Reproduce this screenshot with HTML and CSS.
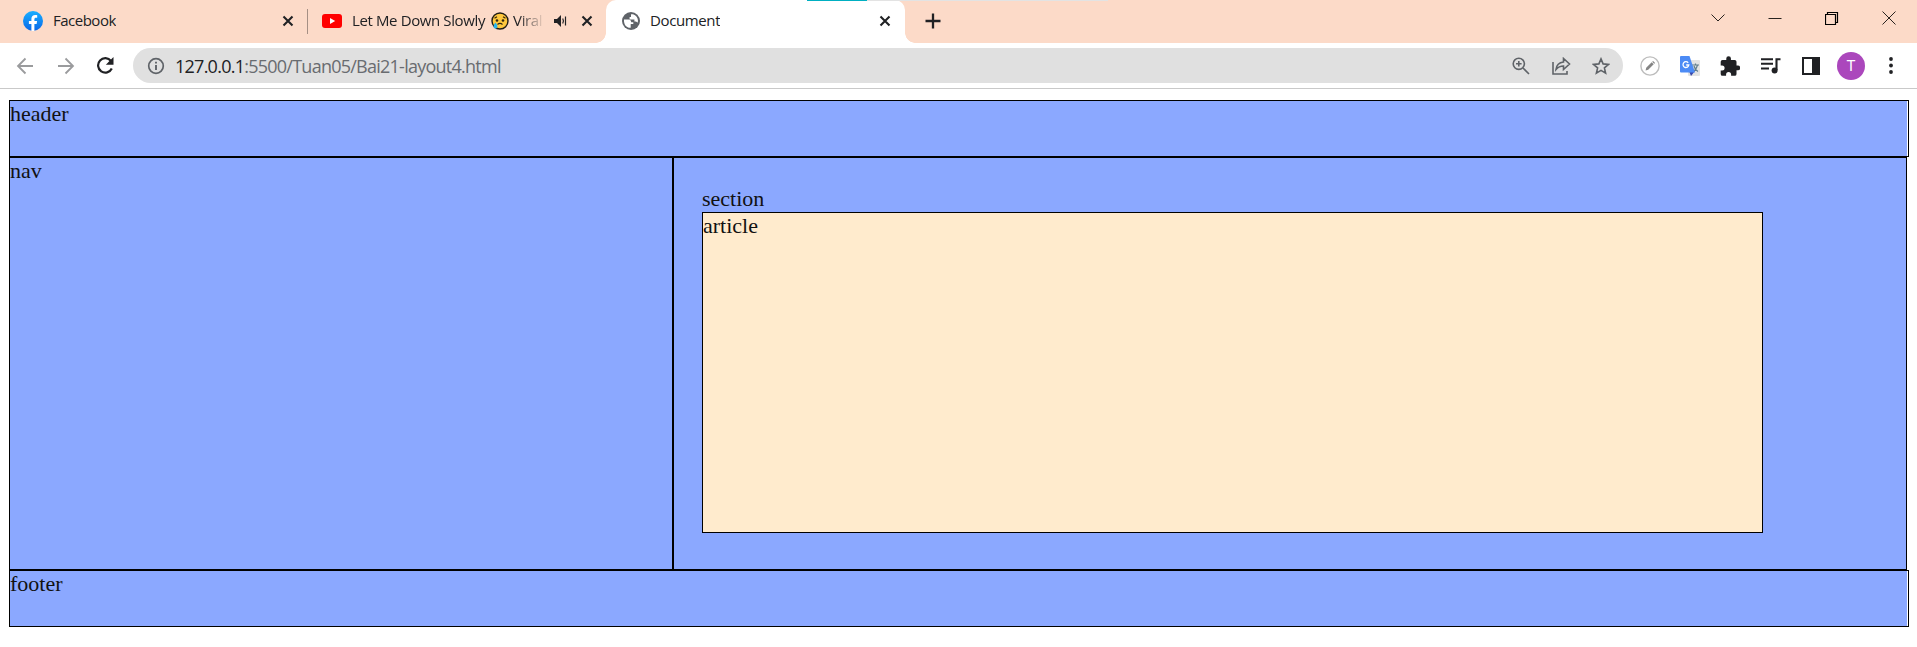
FILE: index.html
```html
<!DOCTYPE html>
<html lang="en">
<head>
<meta charset="utf-8">
<title>Document</title>
<link rel="stylesheet" href="styles.css">
</head>
<body>
<div class="tabstrip">
  <div class="tab tab-facebook">
    <svg class="favicon" width="20" height="20" viewBox="0 0 20 20"><defs><linearGradient id="fb" x2="0" y2="1"><stop stop-color="#19afff"/><stop offset="1" stop-color="#0866e8"/></linearGradient></defs><circle cx="10" cy="10" r="10" fill="url(#fb)"/><path d="M8.400 20v-7H5.900v-3h2.500V8c0-2.600 1.500-4 3.800-4 1 0 2 .2 2 .2v2.500h-1.200c-1.200 0-1.600.7-1.600 1.500V10h2.700l-.5 3h-2.200v7z" fill="#fff"/></svg>
    <span class="tab-title">Facebook</span>
    <svg class="close" width="12" height="12" viewBox="0 0 12 12"><path d="M1.500 1.500l9 9m0-9l-9 9"/></svg>
  </div>
  <div class="tab-divider"></div>
  <div class="tab tab-youtube">
    <svg class="favicon" width="20" height="14" viewBox="0 0 20 14"><rect width="20" height="14" rx="3" fill="#f00"/><path d="M8 4l5.200 3L8 10z" fill="#fff"/></svg>
    <span class="tab-title">Let Me Down Slowly
      <svg class="emoji" width="18" height="18" viewBox="0 0 18 18"><circle cx="9" cy="9" r="8" fill="#ffc83d" stroke="#211d16" stroke-width="1.400"/><path d="M3.500 6.200l2.500-1.500m8.500 1.500L12 4.700M6.500 12.500q2.500-2.200 5 0" fill="none" stroke="#30250e" stroke-width="1.100"/><circle cx="6" cy="8.500" r="1.300" fill="#30250e"/><circle cx="12" cy="8.500" r="1.300" fill="#30250e"/><path d="M4.500 10.500c3 3.400 2 6 0 6s-3-2.600 0-6z" fill="#26b5ef"/></svg>
      Viral</span>
    <svg class="speaker" width="13" height="12" viewBox="0 0 13 12"><path d="M0 4h3l4-4v12L3 8H0z" fill="#202124"/><path d="M8.700 3.500q1.500 2.500 0 5M11.500 1.500v9" fill="none" stroke="#202124" stroke-width="1.200"/></svg>
    <svg class="close" width="12" height="12" viewBox="0 0 12 12"><path d="M1.500 1.500l9 9m0-9l-9 9"/></svg>
  </div>
  <div class="tab tab-active">
    <svg class="favicon" width="18" height="18" viewBox="0 0 18 18"><circle cx="9" cy="9" r="9" fill="#5f6368"/><path d="M2 7.500l4.500 0c1.800.2 2.700 1.200 2.700 2.800h2.100v1.800H8.700v3.700C4.700 16 1.600 13 2 7.500zM9 2.200l2 .1c3 1 5 3.500 5 6.700l-.5 1.700c-1-1.300-2.100-1.100-3.100-1.100V7.400H7.600V4.900H9z" fill="#fff"/></svg>
    <span class="tab-title">Document</span>
    <svg class="close" width="12" height="12" viewBox="0 0 12 12"><path d="M1.500 1.500l9 9m0-9l-9 9"/></svg>
  </div>
  <svg class="new-tab" width="16" height="16" viewBox="0 0 16 16"><path d="M8 .5v15M.5 8h15" stroke="#202124" stroke-width="2.300"/></svg>
  <div class="window-controls">
    <svg width="14" height="14" viewBox="0 0 14 14"><path d="M.5 3.500l6.500 6.500 6.500-6.500"/></svg>
    <svg width="14" height="14" viewBox="0 0 14 14"><path d="M.5 7.500h13" stroke="#000"/></svg>
    <svg width="14" height="14" viewBox="0 0 14 14"><path class="restore" d="M.5 3.500h10v10H.5zM2.500 3V1.500h10v10H11"/></svg>
    <svg width="14" height="14" viewBox="0 0 14 14"><path d="M.5.5l13 13m0-13L.5 13.500"/></svg>
  </div>
  <div class="progress"></div>
</div>
<div class="toolbar">
  <svg class="back" width="18" height="18" viewBox="0 0 18 18"><path d="M17 9H2m7.500-7.500L2 9l7.500 7.500"/></svg>
  <svg class="forward" width="18" height="18" viewBox="0 0 18 18"><path d="M1 9h15M8.500 1.500L16 9l-7.500 7.500"/></svg>
  <svg class="reload" width="18" height="18" viewBox="0 0 18 18"><path d="M15 4A7.200 7.200 0 1 0 15.800 11.500" fill="none" stroke="#202124" stroke-width="2.200"/><path d="M17.500 0v7.700H9.800z" fill="#202124"/></svg>
  <div class="omnibox">
    <svg class="info" width="18" height="18" viewBox="0 0 18 18"><circle cx="9" cy="9" r="7.300" fill="none" stroke="#5f6368" stroke-width="1.700"/><path d="M9 8v5M9 4.700v1.800" stroke="#5f6368" stroke-width="1.900"/></svg>
    <span class="url"><b>127.0.0.1</b>:5500/Tuan05/Bai21-layout4.html</span>
    <svg class="zoom-icon" width="18" height="18" viewBox="0 0 18 18"><circle cx="6.800" cy="6.800" r="5.600"/><path d="M11 11l6 6M4 6.800h5.600M6.800 4v5.600"/></svg>
    <svg class="share" width="19" height="18" viewBox="0 0 19 18"><path d="M1 5v12h14v-3M4 12.500C4.500 8 7 5.500 11.500 5V1.500l6 5.500-6 5.500V9Q7 9 4 12.500z"/></svg>
    <svg class="star" width="18" height="18" viewBox="0 0 18 18"><path d="M9 1.900l2.100 5 5.400.5-4.100 3.500 1.200 5.300L9 13.400l-4.600 2.800 1.200-5.300L1.500 7.400l5.400-.5z"/></svg>
  </div>
  <svg class="pencil" width="20" height="20" viewBox="0 0 20 20"><circle cx="10" cy="10" r="9.100" fill="none" stroke="#bdbdbd" stroke-width="1.400"/><path d="M5.600 14.400l.6-2.600 5.500-5.500 2 2-5.500 5.500zM12.200 5.800l.9-.9 2 2-.9.9z" fill="#858585"/></svg>
  <svg class="translate" width="20" height="20" viewBox="0 0 20 20"><rect x="8" y="4" width="12" height="16" rx="1" fill="#e3e3e3"/><path d="M12 9h7M15.500 7.500V9m2 0q-1.500 5-4.500 6.500M14 10q1 4 4 5.500" fill="none" stroke="#607d8b" stroke-width="1.200"/><path d="M9 15h6l-4 5z" fill="#3949ab"/><path d="M1 0h8.500L15 16.500H1a1 1 0 0 1-1-1V1a1 1 0 0 1 1-1z" fill="#4c8bf5"/><path d="M8.200 6.800A2.900 2.900 0 1 0 8.800 9H6.200" fill="none" stroke="#fff" stroke-width="1.300"/></svg>
  <svg class="puzzle" width="20" height="20" viewBox="1.500 0.700 21 21.500"><path d="M20.500 11H19V7a2 2 0 0 0-2-2h-4V3.500a2.500 2.500 0 0 0-5 0V5H4a2 2 0 0 0-2 2v3.800h1.500a2.700 2.700 0 0 1 0 5.400H2V20a2 2 0 0 0 2 2h3.800v-1.500a2.700 2.700 0 0 1 5.400 0V22H17a2 2 0 0 0 2-2v-4h1.500a2.500 2.500 0 0 0 0-5z" fill="#202124"/></svg>
  <svg class="media" width="20" height="16" viewBox="0 0 20 16"><path d="M0 1.200h12M0 5.700h12M0 10.500h8M19.500 1.200h-4V12" fill="none" stroke="#202124" stroke-width="2.100"/><circle cx="13.600" cy="12.600" r="3" fill="#202124"/></svg>
  <svg class="panel" width="18" height="18" viewBox="0 0 18 18"><path d="M0 0h18v18H0zM2 2v14h8V2z" fill="#202124" fill-rule="evenodd"/></svg>
  <div class="avatar">T</div>
  <svg class="menu" width="4" height="17" viewBox="0 0 4 17"><g fill="#202124"><circle cx="2" cy="2" r="1.900"/><circle cx="2" cy="8.500" r="1.900"/><circle cx="2" cy="15" r="1.900"/></g></svg>
</div>
<main class="page">
  <header class="bar">header</header>
  <div class="row">
    <nav class="nav">nav</nav>
    <section class="section">section
      <article class="article">article</article>
    </section>
  </div>
  <footer class="bar">footer</footer>
</main>
</body>
</html>
```
FILE: styles.css
```css
* { box-sizing: border-box; }
body { margin: 0; height: 647px; overflow: hidden; background: #fff; font-family: "Liberation Serif", serif; font-size: 22px; line-height: 25px; color: #111; }
svg { display: block; flex: none; }

.tabstrip { position: relative; display: flex; align-items: center; height: 43px; background: #fcdac8; font: 15px/22px "Open Sans", sans-serif; color: #202124; padding-bottom: 1px; }
.tab { display: flex; align-items: center; height: 42px; }
.tab-title { position: relative; top: -1px; white-space: nowrap; overflow: hidden; letter-spacing: -.38px; }
.tab-facebook { width: 307px; padding: 0 13px 0 23px; }
.tab-facebook .tab-title { margin-left: 10px; letter-spacing: -.5px; }
.close { margin-left: auto; }
.close path { stroke: #202124; stroke-width: 2.100; }
.tab-divider { width: 1px; height: 25px; background: #a58f84; }
.tab-youtube { width: 298px; padding: 0 13px 0 14px; }
.tab-youtube .tab-title { width: 193px; margin-left: 10px; -webkit-mask-image: linear-gradient(90deg, #000 86%, transparent 100%); mask-image: linear-gradient(90deg, #000 86%, transparent 100%); }
.emoji { display: inline-block; vertical-align: -4px; margin: 0 1px 0 2px; }
.speaker { margin-left: 9px; }
.tab-active { position: relative; width: 299px; height: 43px; margin-bottom: -1px; padding: 0 14px 1px 16px; background: #fff; border-radius: 10px 10px 0 0; }
.tab-active::before, .tab-active::after { content: ""; position: absolute; bottom: 0; width: 10px; height: 10px; }
.tab-active::before { left: -10px; background: radial-gradient(circle at 0 0, transparent 9.500px, #fff 10px); }
.tab-active::after { right: -10px; background: radial-gradient(circle at 100% 0, transparent 9.500px, #fff 10px); }
.tab-active .tab-title { margin-left: 10px; }
.new-tab { margin-left: 20px; }
.window-controls { display: flex; gap: 43px; margin: 0 21px 6px auto; }
.window-controls path { fill: none; stroke: #29231f; stroke-width: 1; }
.window-controls .restore { stroke: #000; stroke-width: 1.200; }
.progress { position: absolute; left: 807px; top: 0; width: 301px; height: 1px; background: linear-gradient(90deg, #00afc1 60px, #e3e3e3 60px); }

.toolbar { display: flex; align-items: center; height: 46px; padding: 1px 24px 1px 16px; border-bottom: 1px solid #c9c9c9; }
.back, .forward { fill: none; stroke: #9a9b9d; stroke-width: 1.800; }
.forward { margin-left: 23px; }
.reload { margin-left: 21px; }
.omnibox { display: flex; align-items: center; width: 1490px; height: 35px; margin-left: 19px; padding: 0 13px 0 14px; border-radius: 18px; background: #e0e0e0; }
.url { margin-left: 10px; font: 18px/26px "Open Sans", sans-serif; color: #696c70; letter-spacing: -.75px; white-space: nowrap; }
.url b { font-weight: 400; color: #202124; }
.zoom-icon, .share, .star { fill: none; stroke: #5f6368; stroke-width: 1.600; }
.zoom-icon { margin-left: auto; }
.share { margin-left: 22px; }
.star { margin-left: 21px; }
.pencil { margin-left: 17px; }
.translate { margin-left: 20px; }
.puzzle { margin-left: 20px; }
.media { margin-left: 21px; }
.panel { margin-left: 21px; }
.avatar { width: 28px; height: 28px; margin-left: 17px; border-radius: 50%; background: #ab47bc; color: #fff; font: 15px/28px Roboto, sans-serif; text-align: center; }
.menu { margin-left: auto; }

.page { width: 1900px; margin: 11px 0 0 9px; }
.bar { height: 57px; border: 1px solid #000; background: linear-gradient(#8ba8ff, #8ba8ff) 0 0 / 1897px 100% no-repeat; }
.row { display: flex; width: 1898px; height: 413px; background: #8ba8ff; }
.nav { width: 664px; border: 1px solid #000; }
.section { flex: 1; padding: 28px; border: 1px solid #000; }
.article { width: 1061px; height: 321px; margin-top: 1px; border: 1px solid #000; background: #ffebcd; }
```
